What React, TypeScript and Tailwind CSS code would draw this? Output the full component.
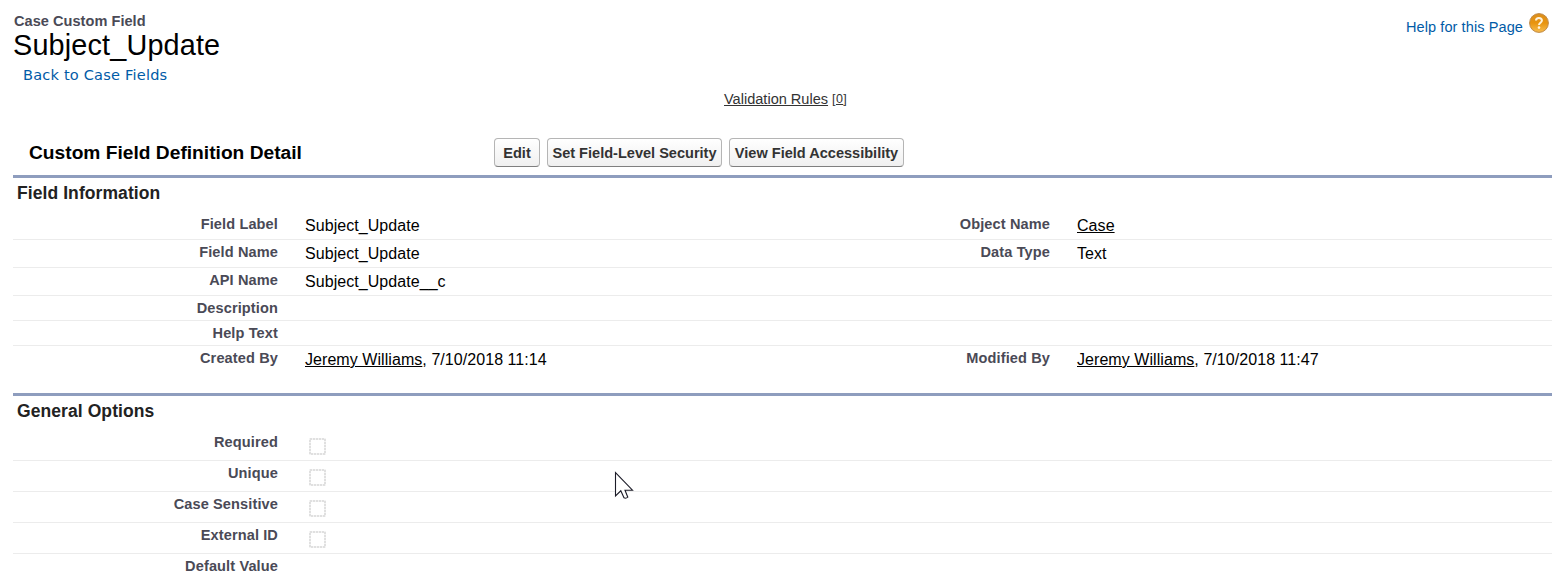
import type { ReactNode } from "react";

type Cell = { label: string; value?: ReactNode };
type Row = { left: Cell; right?: Cell; height: string };

function Person({ name, date }: { name: string; date: string }) {
  return (
    <>
      <a className="underline underline-offset-1">{name}</a>, {date}
    </>
  );
}

function EmptyCheckbox() {
  return (
    <svg className="ml-1 mt-[8px] block h-[17px] w-[17px]" viewBox="0 0 17 17" fill="none">
      <rect x="1" y="1" width="15" height="15" stroke="#f4f4f4" strokeWidth="2" />
      <rect x="1" y="1" width="15" height="15" stroke="#e0e0e0" strokeWidth="2" strokeDasharray="2 1" />
    </svg>
  );
}

function LabelText({ children }: { children?: ReactNode }) {
  return (
    <div className="pt-[3px] text-right text-[14.56px] leading-[18px] font-bold tracking-[0.12px] text-[#4a4a56]">
      {children}
    </div>
  );
}

function ValueText({ children }: { children?: ReactNode }) {
  return <div className="text-[16px] leading-[18px] tracking-[0.06px] text-black">{children}</div>;
}

function DetailRow({ row, last }: { row: Row; last: boolean }) {
  return (
    <div
      className={`grid grid-cols-[265px_27px_480px_265px_27px_1fr] ${row.height} ${last ? "" : "border-b border-[#ececec]"}`}
    >
      <LabelText>{row.left.label}</LabelText>
      <span />
      <ValueText>{row.left.value}</ValueText>
      <LabelText>{row.right?.label}</LabelText>
      <span />
      <ValueText>{row.right?.value}</ValueText>
    </div>
  );
}

function Section({ title, rows }: { title: string; rows: Row[] }) {
  return (
    <section className="border-t-[3px] border-[#8e9dbe]">
      <h3 className="h-[34px] pt-[4px] pl-1 text-[17.5px] leading-[22px] font-bold tracking-[0.08px] text-[#222]">
        {title}
      </h3>
      {rows.map((row, i) => (
        <DetailRow key={row.left.label} row={row} last={i === rows.length - 1} />
      ))}
    </section>
  );
}

function Button({ children, width }: { children: string; width: string }) {
  return (
    <button
      className={`${width} h-[29px] rounded-[4px] border border-[#b5b5b5] border-b-[#7f7f7f] bg-gradient-to-b from-white to-[#f0f0f0] pt-px text-center text-[14.56px] leading-[27px] font-bold whitespace-nowrap text-[#333]`}
    >
      {children}
    </button>
  );
}

function HelpIcon() {
  return (
    <svg className="h-[22px] w-[22px]" viewBox="0 0 22 22">
      <defs>
        <linearGradient id="helpFill" x1="0" y1="0" x2="0" y2="1">
          <stop offset="0" stopColor="#dc8f1c" />
          <stop offset="0.5" stopColor="#e8940f" />
          <stop offset="1" stopColor="#f8bd4e" />
        </linearGradient>
      </defs>
      <circle cx="11" cy="11" r="9.4" fill="url(#helpFill)" stroke="#c08a48" strokeWidth="1" />
      <path
        d="M8 8.6C8 6.8 9.2 5.9 10.9 5.9s3 1 3 2.6c0 2.2-2.9 2.3-2.9 4.5"
        fill="none"
        stroke="#fff3dc"
        strokeWidth="2"
      />
      <circle cx="11" cy="15.6" r="1.3" fill="#fff3dc" />
    </svg>
  );
}

const text = (content: ReactNode) => <div className="pt-[5px]">{content}</div>;
const check = <EmptyCheckbox />;

const fieldRows: Row[] = [
  {
    left: { label: "Field Label", value: text("Subject_Update") },
    right: { label: "Object Name", value: text(<a className="underline underline-offset-1">Case</a>) },
    height: "h-[28px]",
  },
  {
    left: { label: "Field Name", value: text("Subject_Update") },
    right: { label: "Data Type", value: text("Text") },
    height: "h-[28px]",
  },
  { left: { label: "API Name", value: text("Subject_Update__c") }, height: "h-[28px]" },
  { left: { label: "Description" }, height: "h-[25px]" },
  { left: { label: "Help Text" }, height: "h-[25px]" },
  {
    left: { label: "Created By", value: text(<Person name="Jeremy Williams" date="7/10/2018 11:14" />) },
    right: { label: "Modified By", value: text(<Person name="Jeremy Williams" date="7/10/2018 11:47" />) },
    height: "h-[47px]",
  },
];

const optionRows: Row[] = [
  { left: { label: "Required", value: check }, height: "h-[31px]" },
  { left: { label: "Unique", value: check }, height: "h-[31px]" },
  { left: { label: "Case Sensitive", value: check }, height: "h-[31px]" },
  { left: { label: "External ID", value: check }, height: "h-[31px]" },
  { left: { label: "Default Value" }, height: "h-[31px]" },
];

export default function App() {
  return (
    <div className="relative h-[587px] w-[1552px] overflow-hidden bg-white pl-[13px] font-['Liberation_Sans',Arial,sans-serif]">
      <header className="flex h-[90px] justify-between pt-[12px]">
        <div>
          <h1 className="pl-[1px] text-[14.56px] leading-[18px] font-bold tracking-[0.04px] text-[#4a4a56]">
            Case Custom Field
          </h1>
          <h2 className="text-[28.8px] leading-[30px] tracking-[0.17px] text-black">Subject_Update</h2>
          <a className="block pt-[2px] pl-[10px] font-['DejaVu_Sans',sans-serif] text-[14.56px] leading-[26px] tracking-[0.2px] text-[#015ba7]">
            Back to Case Fields
          </a>
        </div>
        <a className="flex items-start gap-[5px] pr-[2px] text-[14.56px] text-[#015ba7]">
          <span className="pt-[6px] leading-[18px] tracking-[0.08px]">Help for this Page</span>
          <HelpIcon />
        </a>
      </header>

      <nav className="flex h-[48px] items-start gap-1 pl-[711px] text-[14.56px] leading-[18px] text-[#333]">
        <a className="underline underline-offset-1">Validation Rules</a>
        <span className="text-[12.5px] tracking-[0.4px]">
          [<a className="underline underline-offset-1">0</a>]
        </span>
      </nav>

      <div className="flex h-[37px] items-start">
        <h2 className="w-[481px] pt-px pl-[16px] text-[19.2px] leading-[28px] font-bold text-black">
          Custom Field Definition Detail
        </h2>
        <div className="flex gap-[7px]">
          <Button width="w-[46px]">Edit</Button>
          <Button width="w-[175px]">Set Field-Level Security</Button>
          <Button width="w-[175px]">View Field Accessibility</Button>
        </div>
      </div>

      <Section title="Field Information" rows={fieldRows} />
      <Section title="General Options" rows={optionRows} />

      <svg className="absolute top-[471px] left-[614px] h-[30px] w-[20px]" viewBox="0 0 20 30">
        <path
          d="M1.5 1.5V25L6.8 19.8L10 26.8Q12 27.8 13.8 26.2L11 19.2H18.5Z"
          fill="#fff"
          stroke="#1c1c28"
          strokeWidth="1.1"
        />
      </svg>
    </div>
  );
}
